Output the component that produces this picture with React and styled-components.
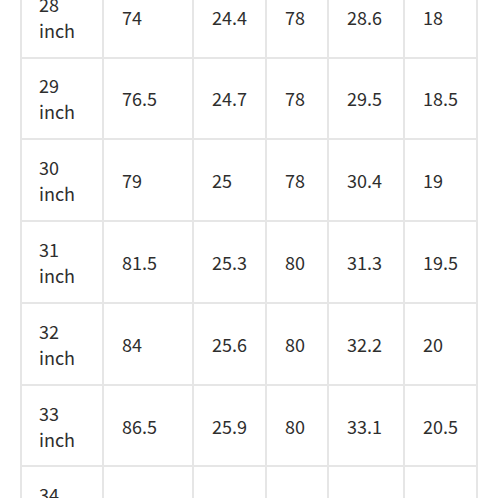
import React from "react";
import styled, { createGlobalStyle } from "styled-components";

const Global = createGlobalStyle`
  html, body { margin: 0; padding: 0; background: #fff; overflow: hidden; }
  body { font-family: "Noto Sans CJK SC", "Noto Sans", sans-serif; }
`;

const Page = styled.div`
  width: 498px;
  height: 498px;
  overflow: hidden;
  background: #fff;
`;

const Grid = styled.div`
  display: grid;
  width: max-content;
  margin: -25.3px 0 0 20px;
  padding: 2px;
  gap: 2px;
  background: #e6e6e6;
  grid-template-columns: 80px 88px 71px 60px 74px 71px;
  grid-auto-rows: 79.8px;
`;

const Cell = styled.div`
  background: #fff;
  display: flex;
  align-items: center;
  padding-left: ${(p) => (p.$first ? "17px" : "18px")};
  font-size: 18px;
  line-height: 26px;
  color: #2e2e2e;
  white-space: pre-line;
`;

const rows = [
  ["28", "74", "24.4", "78", "28.6", "18"],
  ["29", "76.5", "24.7", "78", "29.5", "18.5"],
  ["30", "79", "25", "78", "30.4", "19"],
  ["31", "81.5", "25.3", "80", "31.3", "19.5"],
  ["32", "84", "25.6", "80", "32.2", "20"],
  ["33", "86.5", "25.9", "80", "33.1", "20.5"],
  ["34", "89", "26.2", "80", "34", "21"],
];

export default function App() {
  return (
    <Page>
      <Global />
      <Grid>
        {rows.map((r) =>
          r.map((v, i) => (
            <Cell key={r[0] + "-" + i} $first={i === 0}>
              {i === 0 ? `${v}\ninch` : v}
            </Cell>
          ))
        )}
      </Grid>
    </Page>
  );
}
